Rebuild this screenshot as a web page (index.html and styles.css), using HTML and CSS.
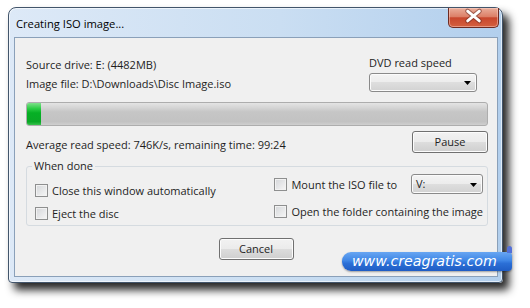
FILE: index.html
```html
<!DOCTYPE html>
<html lang="en">

<head>
    <meta charset="UTF-8">
    <meta name="viewport" content="width=device-width, initial-scale=1.0">
    <title>Creating ISO image...</title>
    <link rel="stylesheet" href="styles.css">
</head>

<body>
    <div class="window">
        <!-- Barra de título -->
        <div class="titlebar">
            <span class="title">Creating ISO image...</span>
            <button class="close-btn" aria-label="Close">
                <svg width="51" height="20" viewBox="0 0 51 20">
                    <path d="M20 4 L32 14 M32 4 L20 14" stroke="#6a2a20" stroke-opacity="0.55" stroke-width="5" stroke-linecap="round" fill="none"/>
                    <path d="M20 4 L32 14 M32 4 L20 14" stroke="#ffffff" stroke-width="2.8" stroke-linecap="round" fill="none"/>
                </svg>
            </button>
        </div>

        <div class="client">
            <div class="top-row">
                <div class="info">
                    <p>Source drive: E: (4482MB)</p>
                    <p>Image file: D:\Downloads\Disc Image.iso</p>
                </div>
                <div class="speed">
                    <span class="speed-label">DVD read speed</span>
                    <div class="combo combo-speed">
                        <span></span>
                        <svg class="arrow" width="7" height="4" viewBox="0 0 7 4"><path d="M0 0 H7 L3.5 4 Z" fill="#000"/></svg>
                    </div>
                </div>
            </div>

            <div class="progress">
                <div class="progress-fill" style="width: 14px;"></div>
            </div>

            <div class="status-row">
                <span class="status">Average read speed: 746K/s, remaining time: 99:24</span>
                <button class="btn btn-pause">Pause</button>
            </div>

            <fieldset class="done-group">
                <legend>When done</legend>
                <div class="done-col done-left">
                    <label class="check"><span class="box"></span>Close this window automatically</label>
                    <label class="check"><span class="box"></span>Eject the disc</label>
                </div>
                <div class="done-col done-right">
                    <div class="mount-row">
                        <label class="check"><span class="box"></span>Mount the ISO file to</label>
                        <div class="combo combo-drive">
                            <span>V:</span>
                            <svg class="arrow" width="7" height="4" viewBox="0 0 7 4"><path d="M0 0 H7 L3.5 4 Z" fill="#000"/></svg>
                        </div>
                    </div>
                    <label class="check"><span class="box"></span>Open the folder containing the image</label>
                </div>
            </fieldset>

            <div class="actions">
                <button class="btn btn-cancel">Cancel</button>
            </div>
        </div>
    </div>

    <div class="watermark">www.creagratis.com</div>
</body>

</html>
```

FILE: styles.css
```css
body {
    margin: 0;
    width: 530px;
    height: 308px;
    overflow: hidden;
    position: relative;
    background: #ffffff;
    color: #1e1e1e;
    font-family: "Open Sans", "Noto Sans", sans-serif;
    font-size: 11px;
}

.window {
    margin: 7px 0 0 8px;
    width: 495px;
    height: 276px;
    box-sizing: border-box;
    border: 1px solid #42556b;
    border-radius: 8px 8px 4px 4px;
    background: linear-gradient(to right, #dde9f7, #cadef2 55%, #b2cfed);
    box-shadow: 6px 7px 9px rgba(0, 0, 0, 0.85), inset 0 0 0 1px rgba(255, 255, 255, 0.6);
    padding: 0 4px 5px 5px;
    display: flex;
    flex-direction: column;
}

.titlebar {
    height: 29px;
    flex-shrink: 0;
    display: flex;
    justify-content: space-between;
    align-items: flex-start;
}

.title {
    padding: 8px 0 0 2px;
    line-height: 16px;
    font-size: 11.2px;
    color: #000;
}

.close-btn {
    width: 51px;
    height: 20px;
    margin-right: -1px;
    padding: 0;
    border: 1px solid #6e2b22;
    border-top: none;
    border-radius: 0 0 5px 5px;
    background: linear-gradient(#eaae9b 0%, #dc8068 45%, #c8472d 52%, #d4603f 100%);
    box-shadow: inset 0 0 0 1px rgba(255, 220, 210, 0.45);
    display: flex;
    align-items: center;
    justify-content: center;
}

.close-btn svg {
    display: block;
    margin: -1px 0 0 -1px;
}

.client {
    height: 240px;
    flex-shrink: 0;
    box-sizing: border-box;
    border: 1px solid #8aa0b9;
    background: #f0f0f0;
    padding: 17px 9px 0 11px;
    display: flex;
    flex-direction: column;
}

.top-row {
    display: flex;
    justify-content: space-between;
}

.info p {
    margin: 0;
    line-height: 19px;
}

.speed {
    width: 108px;
    margin-right: 11px;
}

.speed-label {
    display: block;
    line-height: 16px;
}

.combo {
    box-sizing: border-box;
    border: 1px solid #8a8a8a;
    border-radius: 3px;
    background: linear-gradient(#f4f4f4 0%, #ececec 50%, #dedede 50%, #d2d2d2 100%);
    box-shadow: inset 0 0 0 1px #fbfbfb;
    display: flex;
    align-items: center;
    justify-content: space-between;
    padding: 0 5px 0 4px;
}

.arrow {
    display: block;
}

.combo-speed {
    height: 19px;
    margin-top: 2px;
    padding-right: 5px;
}

.combo-drive {
    width: 72px;
    height: 20px;
    align-items: flex-start;
}

.combo-drive span {
    line-height: 16px;
    margin-top: 1px;
}

.combo-drive .arrow {
    margin-top: 8px;
}

.progress {
    margin-top: 9px;
    height: 24px;
    flex-shrink: 0;
    box-sizing: border-box;
    border: 1px solid #adadad;
    border-radius: 3px;
    background: linear-gradient(#e4e4e4 0%, #d6d6d6 20%, #c6c6c6 40%, #c2c2c2 85%, #cfcfcf 100%);
    overflow: hidden;
}

.progress-fill {
    height: 100%;
    background: linear-gradient(#7fe08a 0%, #2ccd45 25%, #06b025 45%, #0aa826 85%, #38c24c 100%);
}

.status-row {
    display: flex;
    justify-content: space-between;
    align-items: flex-start;
    margin-top: 5px;
}

.status {
    margin-top: 6px;
    line-height: 16px;
}

.btn {
    box-sizing: border-box;
    border: 1px solid #707070;
    border-radius: 3px;
    background: linear-gradient(#f2f2f2 0%, #ebebeb 50%, #dddddd 50%, #cfcfcf 100%);
    box-shadow: inset 0 0 0 1px #fcfcfc;
    font-family: inherit;
    font-size: inherit;
    color: #1e1e1e;
    padding: 0;
    line-height: 18px;
}

.btn-pause {
    width: 76px;
    height: 22px;
}

.btn-cancel {
    width: 75px;
    height: 22px;
    margin-right: 2px;
}

.done-group {
    margin: 6px 0 0 0;
    padding: 0 4px 4px 8px;
    border: 1px solid #d5dbe0;
    border-radius: 3px;
    display: flex;
    min-width: 0;
}

.done-group legend {
    padding: 0 2px;
    margin-left: -3px;
    line-height: 14px;
}

.done-left {
    width: 242px;
    padding-top: 9px;
    display: flex;
    flex-direction: column;
    gap: 7px;
}

.done-right {
    flex: 1;
    padding-top: 1px;
    display: flex;
    flex-direction: column;
    gap: 9px;
}

.mount-row {
    height: 20px;
    display: flex;
    justify-content: space-between;
    align-items: center;
}

.check {
    height: 16px;
    display: flex;
    align-items: center;
    gap: 4px;
    white-space: nowrap;
}

.box {
    width: 13px;
    height: 13px;
    flex-shrink: 0;
    box-sizing: border-box;
    border: 1px solid #8e8f8f;
    background: linear-gradient(135deg, #d4d6d9, #f7f7f7);
    box-shadow: inset 0 0 0 1px #f2f2f2;
}

.actions {
    display: flex;
    justify-content: center;
    margin-top: 12px;
}

/* Marca d'água por cima da janela */
.watermark {
    position: absolute;
    left: 342px;
    top: 252px;
    width: 170px;
    height: 19px;
    box-sizing: border-box;
    padding-left: 10px;
    border-radius: 9px 4px 4px 9px;
    background: linear-gradient(#68a6f2 0%, #3f86e6 45%, #2b6fd6 60%, #1f5cc4 100%);
    box-shadow: 0 1px 2px rgba(0, 0, 0, 0.35);
    color: #ffffff;
    font-family: "DejaVu Sans", Verdana, sans-serif;
    font-style: italic;
    font-size: 14.2px;
    line-height: 19px;
    white-space: nowrap;
}

.watermark::after {
    content: "";
    position: absolute;
    right: 0;
    top: -6px;
    width: 5px;
    height: 7px;
    border-radius: 3px 3px 0 0;
    background: #5470d8;
}
```
